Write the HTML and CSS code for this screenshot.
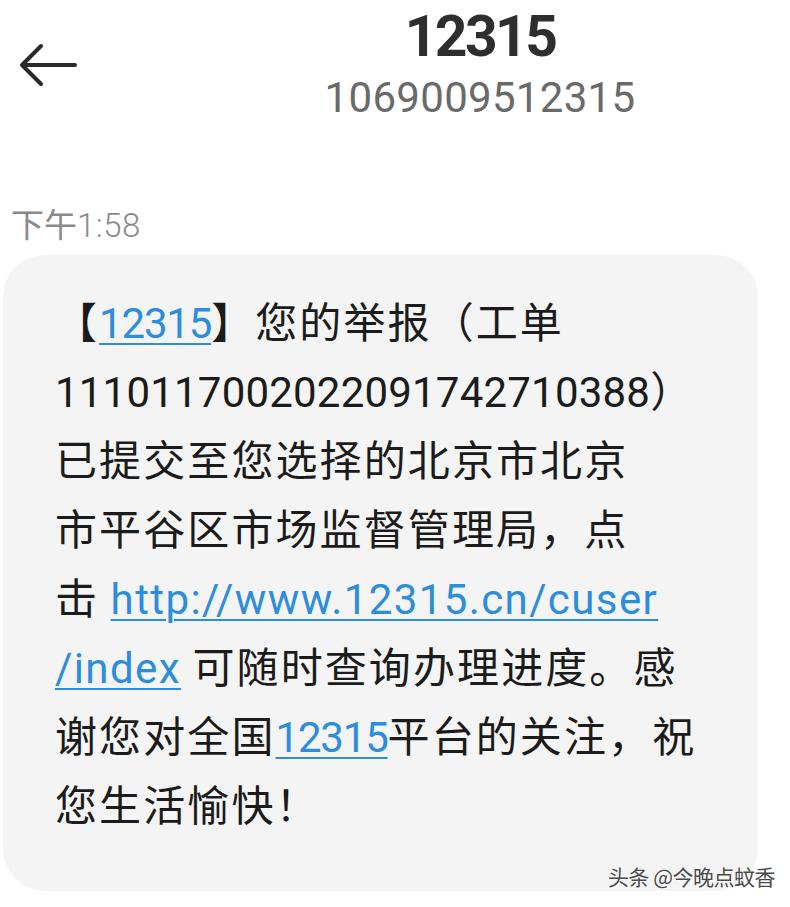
FILE: index.html
```html
<!DOCTYPE html>
<html lang="zh-CN">
<head>
<meta charset="utf-8">
<title>12315</title>
<link rel="stylesheet" href="styles.css">
</head>
<body>
<div class="screen">
  <header class="topbar">
    <div class="back">
      <svg width="60" height="44" viewBox="0 0 60 44" aria-hidden="true">
        <path d="M56 22 H4 M22 3 L3 22 L22 41" fill="none" stroke="#2b2b2b" stroke-width="4" stroke-linecap="round" stroke-linejoin="round"/>
      </svg>
    </div>
    <div class="contact">
      <div class="name">12315</div>
      <div class="number">1069009512315</div>
    </div>
  </header>
  <div class="time">下午<span class="tlat">1:58</span></div>
  <div class="bubble">
    <p class="msg">【<a class="lnk lat num">12315</a>】您的举报（工单<br><span class="lat">1110117002022091742710388</span>）<br>已提交至您选择的北京市北京<br>市平谷区市场监督管理局，点<br>击 <a class="lnk lat url">http://www.12315.cn/cuser</a><br><a class="lnk lat url">/index</a> 可随时查询办理进度。感<br>谢您对全国<a class="lnk lat num">12315</a>平台的关注，祝<br>您生活愉快！</p>
  </div>
  <div class="watermark">头条 @今晚点蚊香</div>
</div>
</body>
</html>
```
FILE: styles.css
```css
html, body {
  margin: 0;
  padding: 0;
  background: #ffffff;
}
.screen {
  position: relative;
  width: 790px;
  height: 907px;
  overflow: hidden;
  font-family: "Noto Sans CJK SC", "Noto Sans", sans-serif;
}
.topbar {
  display: flex;
  align-items: flex-start;
  height: 200px;
}
.back {
  width: 170px;
  padding: 43px 0 0 19px;
  box-sizing: border-box;
}
.back svg {
  display: block;
}
.contact {
  flex: 1;
  text-align: center;
  font-family: Roboto, "Noto Sans", sans-serif;
}
.name {
  font-size: 57px;
  font-weight: 700;
  color: #2e2e2e;
  letter-spacing: -2.6px;
  line-height: 70px;
  margin-top: 2px;
}
.number {
  font-size: 42px;
  color: #6a6a6a;
  letter-spacing: 0.3px;
  line-height: 40px;
  margin-top: 6px;
}
.time {
  font-size: 33px;
  color: #8a8a8a;
  line-height: 48px;
  padding-left: 11px;
  margin-top: -1px;
}
.tlat {
  font-family: Roboto, sans-serif;
  font-weight: 300;
  letter-spacing: 0.5px;
}
.bubble {
  margin: 5px 0 0 3px;
  width: 755px;
  height: 636px;
  box-sizing: border-box;
  background: #f4f4f4;
  border-radius: 42px;
  padding: 30px 0 0 52px;
}
.msg {
  margin: 0;
  font-size: 42px;
  line-height: 69px;
  letter-spacing: 2.1px;
  color: #1b1b1b;
  white-space: nowrap;
}
.lat {
  font-family: Roboto, "Noto Sans", sans-serif;
  letter-spacing: 0.2px;
  line-height: 1;
}
.num {
  letter-spacing: -1.2px;
}
.url {
  letter-spacing: 1.4px;
}
.lnk {
  color: #2d8ddd;
  text-decoration: underline;
  text-decoration-thickness: 2px;
  text-underline-offset: 5px;
}
.watermark {
  position: absolute;
  left: 608px;
  top: 860px;
  font-size: 21px;
  line-height: 32px;
  color: #4a4a4a;
  text-shadow: 0 0 2px #ffffff, 1px 1px 1px #ffffff;
  letter-spacing: -0.5px;
}
```
